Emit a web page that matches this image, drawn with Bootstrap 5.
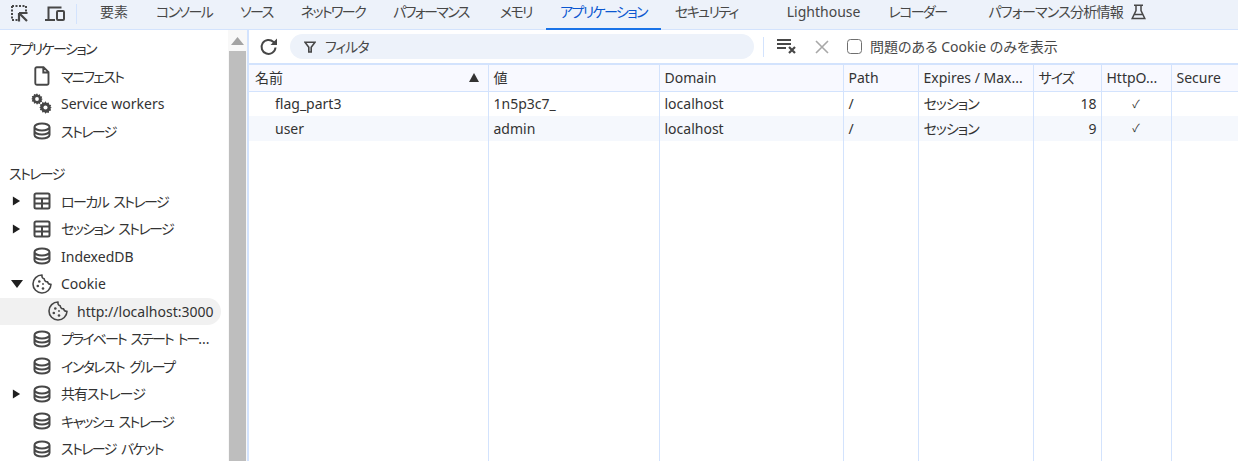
<!DOCTYPE html>
<html lang="ja">

<head>
  <meta charset="UTF-8" />
  <meta name="viewport" content="width=device-width, initial-scale=1.0" />
  <title>DevTools Application</title>
  <link href="https://cdn.jsdelivr.net/npm/bootstrap@5.3.2/dist/css/bootstrap.min.css" rel="stylesheet" />
  <style>
    html, body { height: 100%; }
    body {
      font-family: "Noto Sans", "Noto Sans CJK JP", sans-serif;
      font-size: 14px;
      font-feature-settings: "palt";
      color: #333;
      background: #fff;
      overflow: hidden;
    }

    /* katakana in the reference is narrower than Noto's */
    .kana { letter-spacing: -1.6px; word-spacing: 3px; }
    .kana-lite { letter-spacing: -1px; }
    .kana-long { letter-spacing: -1.9px; word-spacing: 3px; }
    .kana-mix { letter-spacing: -.75px; }
    .dots { letter-spacing: 0; }

    /* top tab strip */
    .dt-tabs { height: 30px; background: #edf2fa; border-bottom: 1px solid #d3e3fd; flex: none; }
    .dt-tool { color: #474747; flex: none; }
    .tool-inspect { margin-left: 10px; }
    .tool-device { margin-left: 16px; }
    .dt-sep { width: 1px; height: 20px; background: #d3e3fd; flex: none; }
    .tabs-sep { margin: 0 9px 0 11px; }
    .dt-tab { height: 30px; padding: 0 14px; line-height: 24px; color: #474747; white-space: nowrap; border-bottom: 2px solid transparent; flex: none; }
    .dt-tab.on { color: #0b57d0; border-bottom-color: #1a73e8; }
    .tab-nudge { margin-left: 3px; }
    .tab-gap { margin-left: 21px; }
    .tab-gap2 { margin-left: 14px; }

    /* left tree */
    .dt-tree { width: 228px; flex: none; padding-top: 5px; overflow: hidden; }
    .tree-head { height: 27.5px; line-height: 27px; padding-left: 9px; color: #333; }
    .tree-head.second { margin-top: 15px; }
    .tree-row { height: 27.5px; display: flex; align-items: center; }
    .tree-caret { width: 33px; flex: none; display: flex; justify-content: center; color: #1f1f1f; }
    .tree-icon { width: 18px; flex: none; margin-right: 10px; color: #474747; overflow: visible; }
    .tree-icon.cookie-icon { width: 20px; margin-left: -1px; margin-right: 9px; }
    .tree-row.child { background: #f1f1f1; border-radius: 0 14px 14px 0; width: 221px; }
    .tree-row.child .tree-caret { width: 48px; }
    .tree-row.child .cookie-icon { margin-left: 0; }

    /* scrollbar */
    .dt-scroll { width: 19px; flex: none; padding: 0 1px; background: #f8f8f8; }
    .scroll-up { height: 21px; display: flex; justify-content: center; align-items: center; color: #a3a3a3; }
    .scroll-thumb { background: #bebebe; flex: 1; }

    /* right pane */
    .dt-main { border-left: 2px solid #d3e3fd; min-width: 0; }
    .dt-bar { height: 35px; flex: none; border-bottom: 2px solid #d3e3fd; }
    .bar-reload { margin: 0 11px 0 10px; color: #474747; flex: none; }
    .bar-filter { width: 464px; height: 25px; border-radius: 13px; background: #edf2fa; padding-left: 14px; color: #474747; }
    .filter-label { margin-left: 9px; }
    .bar-sep { margin: 0 13px 0 9px; }
    .bar-close { margin-left: 18px; margin-right: 18px; color: #a8a8a8; flex: none; }
    .bar-check { margin: 0 8px 0 0; width: 15px; height: 15px; border: 1px solid #6f6f6f; border-radius: 3px; flex: none; }
    .bar-label { color: #474747; }

    /* cookie table */
    .cookie-grid { table-layout: fixed; width: 989px; border-collapse: collapse; margin: 0; --bs-table-bg: transparent; color: #333; }
    .cookie-grid th, .cookie-grid td {
      padding: 0 5px;
      font-weight: 400;
      white-space: nowrap;
      overflow: hidden;
      color: #333;
      border-left: 1px solid #d3e3fd;
      border-bottom: 0;
      vertical-align: middle;
    }
    .cookie-grid th:first-child, .cookie-grid td:first-child { border-left: 0; padding-left: 6px; }
    .cookie-grid thead th { height: 26px; background: #f8f9ff; border-bottom: 1px solid #d3e3fd; }
    .cookie-grid tbody tr.data-row td { height: 25px; }
    .cookie-grid tbody tr.alt-row td { background: #f5f8fd; }
    .cookie-grid td.row-name { padding-left: 26px; }
    .cookie-grid td.filler { height: 320px; }
    .sort-mark { float: right; margin: 6px 4px 0 0; color: #333; }
    .col-a { width: 239px; }
    .col-b { width: 171px; }
    .col-c { width: 184px; }
    .col-d { width: 75px; }
    .col-e { width: 115px; }
    .col-f { width: 68px; }
    .col-g { width: 70px; }
    .col-h { width: 67px; }
    .cookie-grid td.num-cell { text-align: right; padding-right: 4px; }
    .cookie-grid td.chk-cell { text-align: center; font-size: 11px; }
  </style>
</head>

<body class="d-flex flex-column">

  <!-- icon sprites -->
  <svg width="0" height="0" class="d-block position-absolute">
    <symbol id="i-db" viewBox="0 0 18 18">
      <path d="M1.500 5C1.500 3 4.800 1.500 9 1.500s7.500 1.500 7.500 3.500v8c0 2-3.300 3.500-7.500 3.500S1.500 15 1.500 13zM1.500 5c0 2 3.300 3.500 7.500 3.500s7.500-1.500 7.500-3.500M1.500 9c0 2 3.300 3.500 7.500 3.500s7.500-1.500 7.500-3.500" fill="none" stroke="currentColor" stroke-width="2" />
    </symbol>
    <symbol id="i-grid" viewBox="0 0 18 18">
      <path d="M3 1.500h12A1.500 1.500 0 0 1 16.500 3v12a1.500 1.500 0 0 1-1.500 1.500H3A1.500 1.500 0 0 1 1.500 15V3A1.500 1.500 0 0 1 3 1.500zM1.500 6.500h15M1.500 11.500h15M9 6.500v10" fill="none" stroke="currentColor" stroke-width="2" />
    </symbol>
    <symbol id="i-cookie" viewBox="0 0 20 20">
      <path d="M10 1a9 9 0 1 0 9 9.200c-1.800.2-3.100-.7-3.400-2.400-1.800.2-3.300-1.100-3.400-3-1.600-.2-2.500-1.800-2.200-3.800z" fill="none" stroke="currentColor" stroke-width="1.600" stroke-linejoin="round" />
      <circle cx="7.300" cy="7.500" r="1.300" fill="currentColor" />
      <circle cx="5.800" cy="12" r="1.300" fill="currentColor" />
      <circle cx="11" cy="14.500" r="1.300" fill="currentColor" />
      <circle cx="11" cy="10" r=".9" fill="currentColor" />
    </symbol>
    <symbol id="i-right" viewBox="0 0 10 10"><path d="M1 0l8 5-8 5z" fill="currentColor" /></symbol>
    <symbol id="i-down" viewBox="0 0 12 10"><path d="M0 1h12L6 9z" fill="currentColor" /></symbol>
    <symbol id="i-gear" viewBox="0 0 12 12">
      <path d="M6 .2l1.100 1.700 1.900-.6.300 1.900 1.900.4-.6 1.900L11.800 6l-1.200.9.600 1.900-1.900.4-.3 1.900-1.900-.6L6 11.800l-1.100-1.700-1.900.6-.3-1.900-1.900-.4.600-1.900L.2 6l1.200-.9-.6-1.900 1.900-.4.300-1.900 1.900.6z" fill="currentColor" />
      <circle cx="6" cy="6" r="1.900" fill="#fff" />
    </symbol>
  </svg>

  <!-- Tab strip -->
  <nav class="dt-tabs d-flex align-items-start">
    <svg class="dt-tool tool-inspect mt-1" width="19" height="19" viewBox="0 0 19 19">
      <path d="M2 2h14v6M2 2v14h6" fill="none" stroke="currentColor" stroke-width="2" stroke-dasharray="2 1.500" />
      <path d="M9 9h8.500M9 9v8.500M9.500 9.500l7.500 7.500" fill="none" stroke="currentColor" stroke-width="2.200" />
    </svg>
    <svg class="dt-tool tool-device mt-1" width="20" height="19" viewBox="0 0 20 19">
      <path d="M3.500 15V3.500h13M0 16h10" fill="none" stroke="currentColor" stroke-width="2" />
      <rect x="12" y="7" width="7" height="9" rx="1" fill="none" stroke="currentColor" stroke-width="2" />
    </svg>
    <span class="dt-sep tabs-sep mt-1"></span>
    <span class="dt-tab">要素</span>
    <span class="dt-tab kana">コンソール</span>
    <span class="dt-tab kana">ソース</span>
    <span class="dt-tab kana">ネットワーク</span>
    <span class="dt-tab kana">パフォーマンス</span>
    <span class="dt-tab kana tab-nudge">メモリ</span>
    <span class="dt-tab kana on">アプリケーション</span>
    <span class="dt-tab kana">セキュリティ</span>
    <span class="dt-tab tab-gap">Lighthouse</span>
    <span class="dt-tab kana">レコーダー</span>
    <span class="dt-tab tab-gap2 d-flex gap-2"><span class="kana-mix">パフォーマンス分析情報</span>
      <svg class="mt-1" width="15" height="16" viewBox="0 0 15 16">
        <path d="M3 1.200h9M5 1.200v5.300L1.200 14.500h12.600L10 6.500V1.200M3.500 10.500h8" fill="none" stroke="currentColor" stroke-width="1.500" />
      </svg>
    </span>
  </nav>

  <div class="d-flex flex-grow-1 overflow-hidden">
    <!-- Left tree -->
    <aside class="dt-tree">
      <div class="tree-head kana">アプリケーション</div>
      <div class="tree-row"><span class="tree-caret"></span>
        <svg class="tree-icon" width="18" height="20" viewBox="0 0 18 20"><path d="M3.800 1.200h6.700l5 5v11.100a1.500 1.500 0 0 1-1.500 1.500H3.800a1.500 1.500 0 0 1-1.500-1.500V2.700a1.500 1.500 0 0 1 1.500-1.500zM10.300 1.200v5.300h5" fill="none" stroke="currentColor" stroke-width="1.900" /></svg>
        <span class="kana">マニフェスト</span></div>
      <div class="tree-row"><span class="tree-caret"></span>
        <svg class="tree-icon" width="18" height="20" viewBox="0 0 18 20"><use href="#i-gear" x="-2" y="-1" width="12" height="12" /><use href="#i-gear" x="6" y="7" width="13" height="13" /></svg>
        <span>Service workers</span></div>
      <div class="tree-row"><span class="tree-caret"></span><svg class="tree-icon" width="18" height="18"><use href="#i-db" /></svg><span class="kana">ストレージ</span></div>

      <div class="tree-head second kana">ストレージ</div>
      <div class="tree-row"><span class="tree-caret"><svg width="9" height="10"><use href="#i-right" /></svg></span><svg class="tree-icon" width="18" height="18"><use href="#i-grid" /></svg><span class="kana">ローカル ストレージ</span></div>
      <div class="tree-row"><span class="tree-caret"><svg width="9" height="10"><use href="#i-right" /></svg></span><svg class="tree-icon" width="18" height="18"><use href="#i-grid" /></svg><span class="kana">セッション ストレージ</span></div>
      <div class="tree-row"><span class="tree-caret"></span><svg class="tree-icon" width="18" height="18"><use href="#i-db" /></svg><span>IndexedDB</span></div>
      <div class="tree-row"><span class="tree-caret"><svg width="12" height="10"><use href="#i-down" /></svg></span><svg class="tree-icon cookie-icon" width="20" height="20"><use href="#i-cookie" /></svg><span>Cookie</span></div>
      <div class="tree-row child"><span class="tree-caret"></span><svg class="tree-icon cookie-icon" width="20" height="20"><use href="#i-cookie" /></svg><span>http://localhost:3000</span></div>
      <div class="tree-row"><span class="tree-caret"></span><svg class="tree-icon" width="18" height="18"><use href="#i-db" /></svg><span class="kana-long">プライベート ステート トー<span class="dots">...</span></span></div>
      <div class="tree-row"><span class="tree-caret"></span><svg class="tree-icon" width="18" height="18"><use href="#i-db" /></svg><span class="kana">インタレスト グループ</span></div>
      <div class="tree-row"><span class="tree-caret"><svg width="9" height="10"><use href="#i-right" /></svg></span><svg class="tree-icon" width="18" height="18"><use href="#i-db" /></svg><span class="kana-lite">共有ストレージ</span></div>
      <div class="tree-row"><span class="tree-caret"></span><svg class="tree-icon" width="18" height="18"><use href="#i-db" /></svg><span class="kana">キャッシュ ストレージ</span></div>
      <div class="tree-row"><span class="tree-caret"></span><svg class="tree-icon" width="18" height="18"><use href="#i-db" /></svg><span class="kana">ストレージ バケット</span></div>
    </aside>

    <!-- Scrollbar -->
    <div class="dt-scroll d-flex flex-column">
      <div class="scroll-up"><svg width="13" height="8" viewBox="0 0 13 8"><path d="M6.500 0L13 8H0z" fill="currentColor" /></svg></div>
      <div class="scroll-thumb"></div>
    </div>

    <!-- Cookie pane -->
    <main class="dt-main flex-grow-1 d-flex flex-column">
      <div class="dt-bar d-flex align-items-center">
        <svg class="bar-reload" width="20" height="20" viewBox="0 0 20 20">
          <path d="M16.500 10.500a7 7 0 1 1-2-5.500l2 2" fill="none" stroke="currentColor" stroke-width="2" />
          <path d="M18 1.500V8h-6.500z" fill="currentColor" />
        </svg>
        <div class="bar-filter d-flex align-items-center">
          <svg width="12" height="12" viewBox="0 0 12 12"><path d="M1 1.300h10L7.200 6.200V11H4.800V6.200z" fill="none" stroke="currentColor" stroke-width="1.600" /></svg>
          <span class="filter-label kana-lite">フィルタ</span>
        </div>
        <span class="dt-sep bar-sep"></span>
        <svg width="20" height="17" viewBox="0 0 20 17" class="dt-tool">
          <path d="M0 2h14M0 6h14M0 10h9" fill="none" stroke="currentColor" stroke-width="1.800" />
          <path d="M12 9l6 6M18 9l-6 6" fill="none" stroke="currentColor" stroke-width="2.200" />
        </svg>
        <svg class="bar-close" width="14" height="14" viewBox="0 0 14 14"><path d="M1 1l12 12M13 1L1 13" fill="none" stroke="currentColor" stroke-width="1.600" /></svg>
        <input type="checkbox" class="form-check-input bar-check" id="issues-only" />
        <label class="bar-label" for="issues-only">問題のある Cookie のみを表示</label>
      </div>

      <table class="table table-borderless cookie-grid">
        <colgroup>
          <col class="col-a" /><col class="col-b" /><col class="col-c" /><col class="col-d" />
          <col class="col-e" /><col class="col-f" /><col class="col-g" /><col class="col-h" />
        </colgroup>
        <thead>
          <tr>
            <th>名前<svg class="sort-mark" width="10" height="9" viewBox="0 0 10 9"><path d="M5 0l5 9H0z" fill="currentColor" /></svg></th>
            <th>値</th><th>Domain</th><th>Path</th><th>Expires / Max...</th><th class="kana-lite">サイズ</th><th>HttpO...</th><th>Secure</th>
          </tr>
        </thead>
        <tbody>
          <tr class="data-row">
            <td class="row-name">flag_part3</td><td>1n5p3c7_</td><td>localhost</td><td>/</td><td class="kana-lite">セッション</td><td class="num-cell">18</td><td class="chk-cell">✓</td><td></td>
          </tr>
          <tr class="data-row alt-row">
            <td class="row-name">user</td><td>admin</td><td>localhost</td><td>/</td><td class="kana-lite">セッション</td><td class="num-cell">9</td><td class="chk-cell">✓</td><td></td>
          </tr>
          <tr>
            <td class="filler"></td><td></td><td></td><td></td><td></td><td></td><td></td><td></td>
          </tr>
        </tbody>
      </table>
    </main>
  </div>

</body>

</html>
